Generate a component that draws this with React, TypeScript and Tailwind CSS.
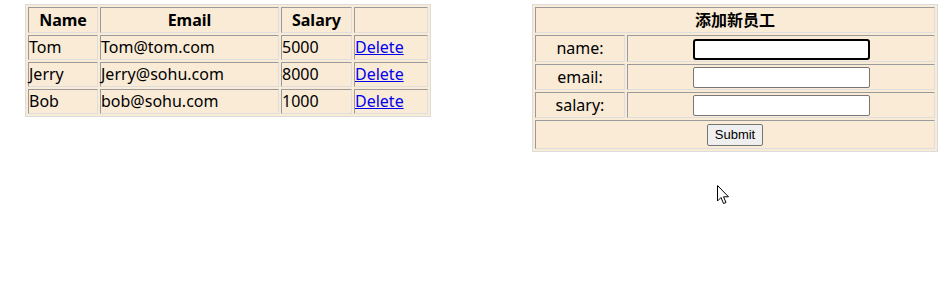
import { useState } from "react";

type Employee = { name: string; email: string; salary: number };

const initial: Employee[] = [
  { name: "Tom", email: "Tom@tom.com", salary: 5000 },
  { name: "Jerry", email: "Jerry@sohu.com", salary: 8000 },
  { name: "Bob", email: "bob@sohu.com", salary: 1000 },
];

// old-school border=1 look: sunken cells inside a raised table
const cell =
  "border border-t-[#9a9a9a] border-l-[#9a9a9a] border-b-[#dedede] border-r-[#dedede] p-0 leading-[21px]";
const table =
  "border-separate border-spacing-[2px] border border-[#dcdcdc] bg-[#faebd7] text-[16px] text-black";

const Cursor = () => (
  <svg
    className="absolute left-[717px] top-[185px]"
    width="13"
    height="21"
    viewBox="0 0 13 21"
  >
    <path
      d="M0.5 0.5 L0.5 16 L4 12.5 L6.5 18.5 L9 17.5 L6.5 11.8 L11.5 11.8 Z"
      fill="#fff"
      stroke="#000"
      strokeWidth="1"
      strokeLinejoin="round"
    />
  </svg>
);

export default function App() {
  const [rows, setRows] = useState(initial);
  const [name, setName] = useState("");
  const [email, setEmail] = useState("");
  const [salary, setSalary] = useState("");

  const add = () => {
    if (!name) return;
    setRows([...rows, { name, email, salary: Number(salary) || 0 }]);
    setName("");
    setEmail("");
    setSalary("");
  };

  return (
    <div
      className="relative flex items-start pl-[25px] pt-[4px] bg-white min-h-[283px]"
      style={{ fontFamily: '"Noto Sans", "Noto Sans CJK SC", sans-serif' }}
    >
      <table className={`${table} w-[406px]`}>
        <thead>
          <tr className="h-[26px]">
            <th className={`${cell} w-[70px] font-bold`}>Name</th>
            <th className={`${cell} w-[179px] font-bold`}>Email</th>
            <th className={`${cell} w-[71px] font-bold`}>Salary</th>
            <th className={cell}></th>
          </tr>
        </thead>
        <tbody>
          {rows.map((r, i) => (
            <tr key={i} className="h-[25px]">
              <td className={cell}>{r.name}</td>
              <td className={cell}>{r.email}</td>
              <td className={cell}>{r.salary}</td>
              <td className={cell}>
                <a
                  href="#"
                  className="text-[#0000ee] underline"
                  onClick={(e) => {
                    e.preventDefault();
                    setRows(rows.filter((_, j) => j !== i));
                  }}
                >
                  Delete
                </a>
              </td>
            </tr>
          ))}
        </tbody>
      </table>

      <table className={`${table} ml-[101px] w-[406px]`}>
        <tbody>
          <tr className="h-[26px]">
            <th colSpan={2} className={`${cell} font-bold`}>
              添加新员工
            </th>
          </tr>
          <tr className="h-[27px]">
            <td className={`${cell} w-[90px] text-center`}>name:</td>
            <td className={`${cell} text-center`}>
              <input
                autoFocus
                value={name}
                onChange={(e) => setName(e.target.value)}
                className="w-[177px] h-[21px] align-middle rounded-[3px] border-2 border-black bg-white px-[2px] outline-none"
              />
            </td>
          </tr>
          <tr className="h-[26px]">
            <td className={`${cell} text-center`}>email:</td>
            <td className={`${cell} text-center`}>
              <input
                value={email}
                onChange={(e) => setEmail(e.target.value)}
                className="w-[177px] h-[21px] align-middle rounded-[2px] border border-[#767676] bg-white px-[2px] outline-none"
              />
            </td>
          </tr>
          <tr className="h-[26px]">
            <td className={`${cell} text-center`}>salary:</td>
            <td className={`${cell} text-center`}>
              <input
                value={salary}
                onChange={(e) => setSalary(e.target.value)}
                className="w-[177px] h-[21px] align-middle rounded-[2px] border border-[#767676] bg-white px-[2px] outline-none"
              />
            </td>
          </tr>
          <tr className="h-[29px]">
            <td colSpan={2} className={`${cell} text-center`}>
              <button
                onClick={add}
                className="h-[22px] px-[7px] align-middle rounded-[2px] border border-[#767676] bg-[#efefef] text-[13px] leading-none"
                style={{ fontFamily: '"Liberation Sans", Arial, sans-serif' }}
              >
                Submit
              </button>
            </td>
          </tr>
        </tbody>
      </table>

      <Cursor />
    </div>
  );
}
